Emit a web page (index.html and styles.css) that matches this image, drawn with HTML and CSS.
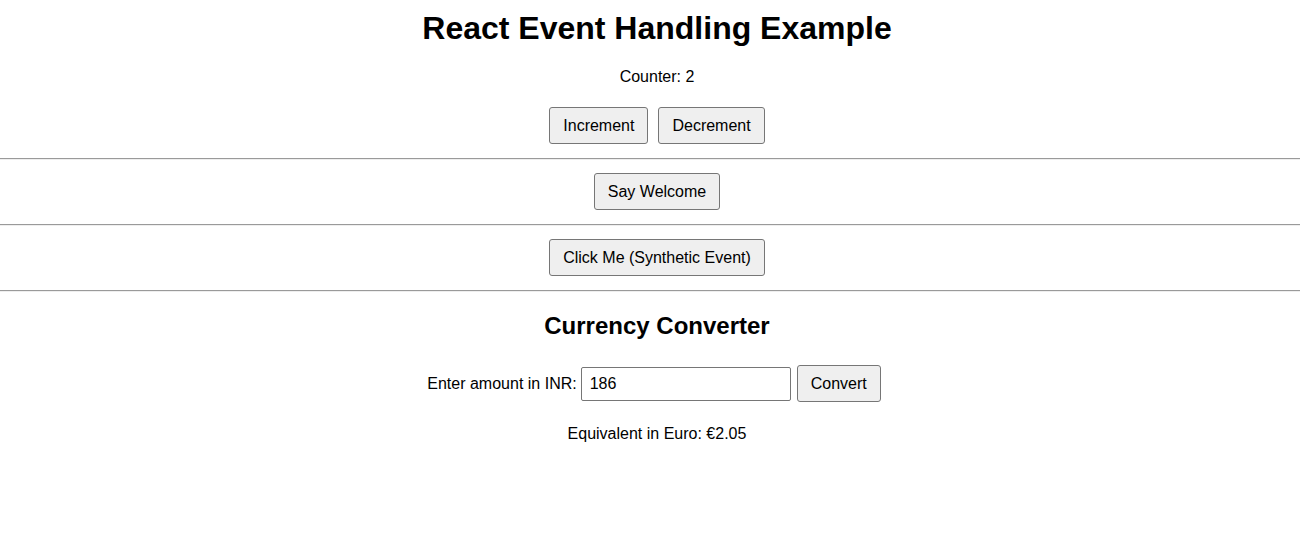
FILE: index.html
```html
<!DOCTYPE html>
<html>
<head>
<meta charset="utf-8">
<link rel="stylesheet" href="styles.css">
</head>
<body>
<div class="app">
  <h1 class="title">React Event Handling Example</h1>
  <p class="text">Counter: 2</p>
  <div class="row">
    <button class="btn">Increment</button>
    <button class="btn">Decrement</button>
  </div>
  <hr class="rule">
  <div class="row">
    <button class="btn">Say Welcome</button>
  </div>
  <hr class="rule">
  <div class="row">
    <button class="btn">Click Me (Synthetic Event)</button>
  </div>
  <hr class="rule">
  <h2 class="subtitle">Currency Converter</h2>
  <div class="row form">
    <label class="label">Enter amount in INR:</label>
    <input class="field" type="text" value="186">
    <button class="btn convert">Convert</button>
  </div>
  <p class="text result">Equivalent in Euro: €2.05</p>
</div>
</body>
</html>
```

FILE: styles.css
```css
html, body {
  margin: 0;
  padding: 0;
  background: #fff;
  overflow: hidden;
}
body {
  font-family: "Liberation Sans", Arial, sans-serif;
  color: #000;
}
.app {
  padding-left: 14px;
  text-align: center;
}
.title {
  font-size: 32px;
  font-weight: bold;
  line-height: 37px;
  margin: 10px 0 21px;
}
.text {
  font-size: 16px;
  line-height: 18px;
  margin: 0;
}
.row {
  display: flex;
  justify-content: center;
  align-items: center;
  gap: 10px;
  padding: 21px 0 14px;
}
.rule + .row {
  padding: 13px 0 14px;
}
.btn {
  font-family: "Liberation Sans", Arial, sans-serif;
  font-size: 16px;
  line-height: 19px;
  height: 37px;
  box-sizing: border-box;
  padding: 8px 13px;
  border: 1px solid #767676;
  border-radius: 3px;
  background: #efefef;
  color: #000;
  margin: 0;
}
.rule {
  margin: 0 0 0 -14px;
  height: 0;
  border: 0;
  border-top: 1px solid #9a9a9a;
  border-bottom: 1px solid #eeeeee;
}
.subtitle {
  font-size: 24px;
  font-weight: bold;
  line-height: 28px;
  margin: 20px 0 0;
}
.form {
  padding: 25px 6px 0 0;
  gap: 0;
}
.label {
  font-size: 16px;
  margin-right: 4px;
}
.field {
  font-family: "Liberation Sans", Arial, sans-serif;
  font-size: 16px;
  width: 210px;
  height: 34px;
  box-sizing: border-box;
  padding: 4px 8px;
  border: 1px solid #767676;
  border-radius: 2px;
  margin: 0 6px 0 0;
}
.convert {
  padding: 8px 13px;
}
.result {
  margin-top: 23px;
}
```
